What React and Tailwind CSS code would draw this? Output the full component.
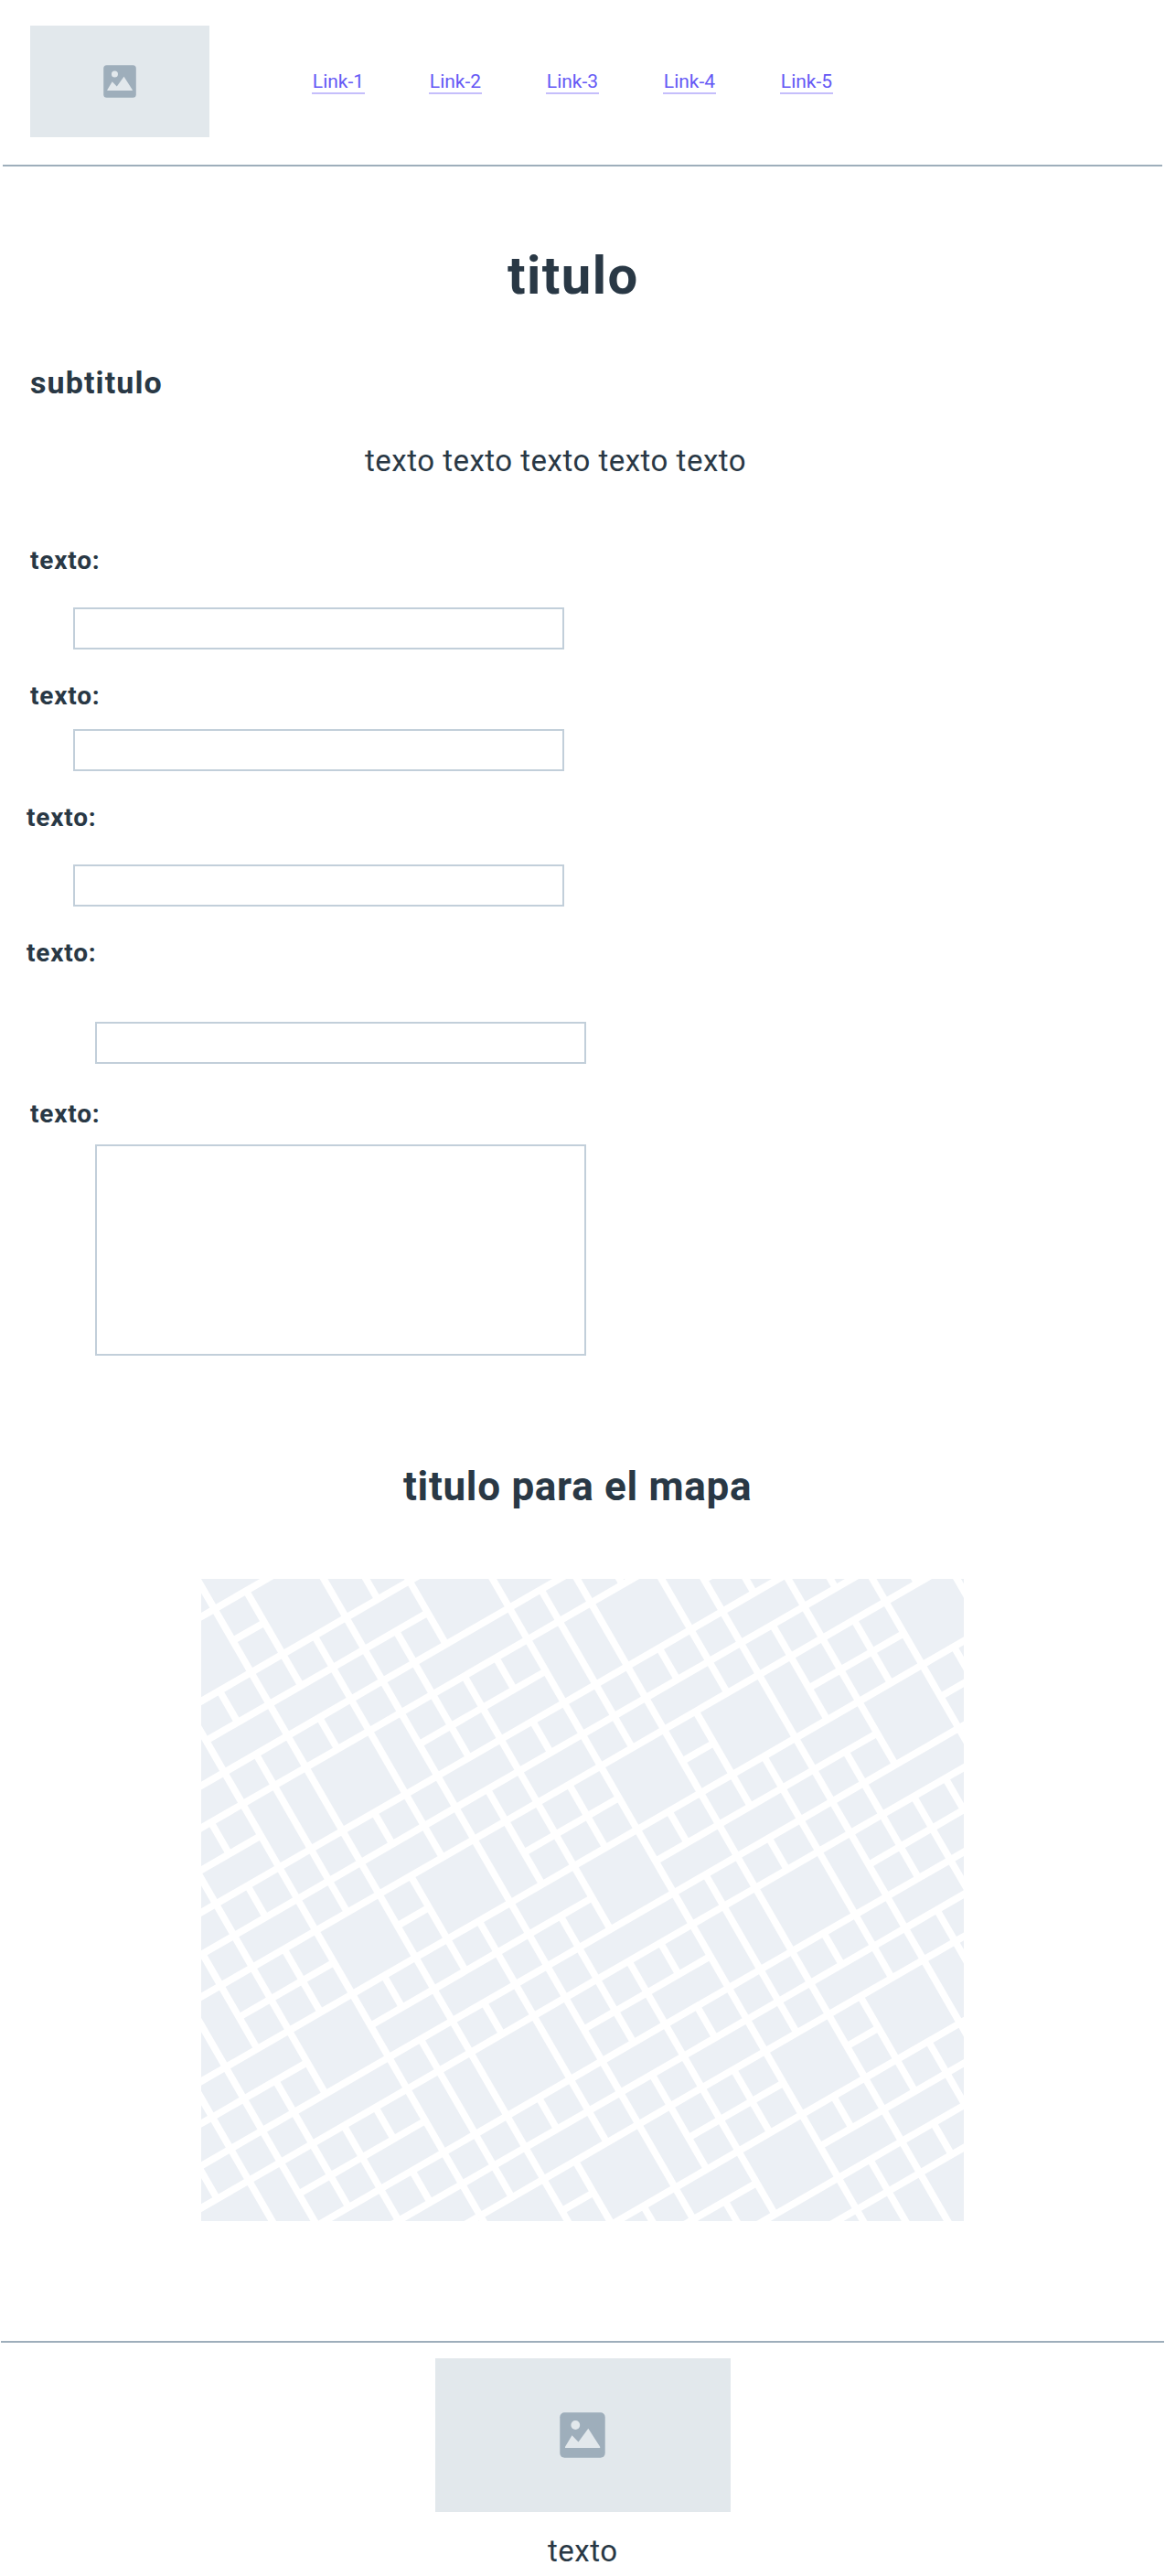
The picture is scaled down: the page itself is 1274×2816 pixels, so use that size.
import React from "react";

// City blocks of one 9x9 map tile: [column, row, width, height]
const TILE = [
  [0, 0, 1, 1], [1, 0, 2, 2], [3, 0, 1, 2], [4, 0, 1, 1], [5, 0, 1, 1], [6, 0, 1, 1], [7, 0, 2, 2],
  [0, 1, 1, 1], [4, 1, 1, 1], [5, 1, 1, 1], [6, 1, 1, 1],
  [0, 2, 1, 1], [1, 2, 1, 1], [2, 2, 1, 1], [3, 2, 2, 1], [5, 2, 2, 2], [7, 2, 1, 1], [8, 2, 1, 1],
  [0, 3, 2, 1], [2, 3, 1, 1], [3, 3, 1, 1], [4, 3, 1, 1], [7, 3, 2, 1],
  [0, 4, 1, 1], [1, 4, 1, 1], [2, 4, 1, 1], [3, 4, 1, 1], [4, 4, 3, 1], [7, 4, 1, 1], [8, 4, 1, 1],
  [0, 5, 2, 2], [2, 5, 1, 2], [3, 5, 1, 1], [4, 5, 1, 1], [5, 5, 1, 1], [6, 5, 1, 1], [7, 5, 1, 2], [8, 5, 1, 2],
  [3, 6, 1, 1], [4, 6, 1, 1], [5, 6, 2, 1],
  [0, 7, 1, 1], [1, 7, 1, 1], [2, 7, 1, 1], [3, 7, 2, 1], [5, 7, 1, 1], [6, 7, 1, 1], [7, 7, 1, 1], [8, 7, 1, 1],
  [0, 8, 2, 1], [2, 8, 1, 1], [3, 8, 1, 1], [4, 8, 1, 1], [5, 8, 2, 1], [7, 8, 1, 1], [8, 8, 1, 1],
];
const UNIT = 39.98;
const ROAD = 7.7;

function StreetMap() {
  const blocks = [];
  for (let a = -2; a <= 2; a++) {
    for (let b = -1; b <= 3; b++) {
      TILE.forEach(([x, y, w, h]) => {
        blocks.push(
          <rect
            key={`${a},${b},${x},${y}`}
            x={(a * 9 + x) * UNIT + ROAD / 2}
            y={(b * 9 + y) * UNIT + ROAD / 2}
            width={w * UNIT - ROAD}
            height={h * UNIT - ROAD}
          />
        );
      });
    }
  }
  return (
    <svg className="mt-[75px] ml-[220px] block h-[702px] w-[834px] overflow-hidden" viewBox="0 0 834 702" fill="#ecf0f5">
      <g transform="translate(14.6 33) rotate(-30)">{blocks}</g>
    </svg>
  );
}

function Placeholder({ className, iconClass }) {
  return (
    <div className={`flex items-center justify-center bg-[#e2e8ec] ${className}`}>
      <svg className={iconClass} viewBox="0 0 50 50">
        <rect x="0.3" y="0.3" width="49.4" height="49.4" rx="5" fill="#9eaebb" />
        <circle cx="17.3" cy="14" r="4.9" fill="#e2e8ec" />
        <path d="M6 39V37.8L13.5 25.2L20.5 32.5L31.3 17.8L44.2 37.8V39Z" fill="#e2e8ec" />
      </svg>
    </div>
  );
}

function Field({ labelClass, inputClass }) {
  return (
    <label className="block">
      <span className={`block text-[28px] leading-8 font-bold tracking-[0.8px] ${labelClass}`}>texto:</span>
      <input className={`block h-[46px] w-[537px] border-2 border-[#c2cfda] bg-transparent outline-none ${inputClass}`} />
    </label>
  );
}

export default function App() {
  return (
    <div className="flow-root h-[2816px] w-[1274px] overflow-hidden bg-white font-['Roboto',sans-serif] text-[#293845]">
      <header>
        <div className="flex h-[180px] items-start pt-7 pl-[33px]">
          <Placeholder className="h-[122px] w-[196px]" iconClass="h-9 w-9" />
          <nav className="mt-[50px] ml-28 flex gap-[70px]">
            {[1, 2, 3, 4, 5].map((n) => (
              <a key={n} href="#" className="block h-[25px] w-[58px] border-b-2 border-[#c5befb] text-center text-[21px] leading-[23px] text-[#6558f5]">
                {`Link-${n}`}
              </a>
            ))}
          </nav>
        </div>
        <div className="mx-[3px] h-0.5 bg-[#9eaebb]" />
      </header>

      <main className="flow-root">
        <h1 className="mt-[89px] ml-[555px] text-[58px] leading-[60px] font-bold tracking-[1.4px]">titulo</h1>
        <h2 className="mt-[67px] ml-[33px] text-[34px] leading-10 font-bold tracking-[1.1px]">subtitulo</h2>
        <p className="mt-[46px] ml-[399px] text-[33px] leading-10 tracking-[0.5px]">texto texto texto texto texto</p>

        <form className="mt-[73px]">
          <Field labelClass="ml-[33px]" inputClass="mt-[35px] ml-20" />
          <Field labelClass="mt-[35px] ml-[33px]" inputClass="mt-5 ml-20" />
          <Field labelClass="mt-[35px] ml-[29px]" inputClass="mt-[35px] ml-20" />
          <Field labelClass="mt-[35px] ml-[29px]" inputClass="mt-[59px] ml-[104px]" />
          <label className="block">
            <span className="mt-[39px] ml-[33px] block text-[28px] leading-8 font-bold tracking-[0.8px]">texto:</span>
            <textarea className="mt-[17px] ml-[104px] block h-[231px] w-[537px] resize-none border-2 border-[#c2cfda] bg-transparent outline-none" />
          </label>
        </form>

        <h2 className="mt-[117px] ml-[441px] text-[44px] leading-[52px] font-bold tracking-[0.7px]">titulo para el mapa</h2>
        <StreetMap />
      </main>

      <footer className="mt-[131px]">
        <div className="mx-px h-0.5 bg-[#9eaebb]" />
        <Placeholder className="mt-[17px] ml-[476px] h-[168px] w-[323px] pr-px" iconClass="h-[50px] w-[50px]" />
        <p className="mt-[23px] ml-[599px] text-[33px] leading-10 tracking-[0.5px]">texto</p>
      </footer>
    </div>
  );
}
